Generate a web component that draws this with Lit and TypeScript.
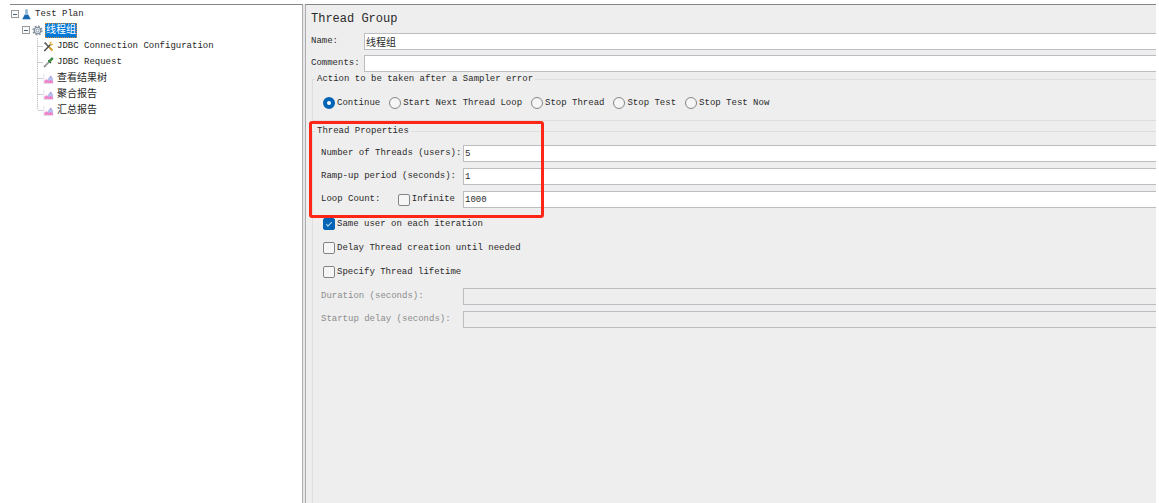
import { LitElement, html, svg, css, nothing } from "lit";
import { customElement, state } from "lit/decorators.js";

const icons: Record<string, unknown> = {
  flask: svg`<path d="M4.6 .8h2.8M5 1v4L2 10.6h8L7 5V1" fill="#dbe9f5" stroke="#8fa9bf" stroke-width=".8"/>
    <path d="M4.2 6.2h3.6l2.7 4.9h-9z" fill="#1768ae"/><path d="M5 1v5h2V1z" fill="#8dbbe0"/>`,
  gear: svg`<circle cx="6" cy="6" r="4.800" fill="none" stroke="#8a94a0" stroke-width="1.600" stroke-dasharray="2 1.770"/>
    <circle cx="6" cy="6" r="3.500" fill="#dfe5ec" stroke="#7f8a96" stroke-width="1.200"/>
    <circle cx="6" cy="6" r="1.500" fill="#fff" stroke="#7488a0" stroke-width=".8"/>`,
  tools: svg`<path d="M2.200 2.200l7.600 7.600" stroke="#555" stroke-width="1.500"/>
    <path d="M.8 2.400L2.600 1l1.800 1.600-.8 1.600z" fill="#6d6d6d"/>
    <path d="M6.800 6.800l3.600 3.800" stroke="#e0a024" stroke-width="2"/>
    <path d="M1.400 10.800l6.800-6.900" stroke="#4a4a4a" stroke-width="1.500"/>
    <path d="M7.600 1.400c1-.8 1.800-.6 2-.4L8.600 2.600l1 .9 1.500-1c.3 1-.4 2.400-1.900 2.400-1.400 0-2.500-1.500-1.600-3.500z" fill="#e2ae3c"/>`,
  dropper: svg`<path d="M1.200 10.900l5.800-6" stroke="#6e7770" stroke-width="1.800"/>
    <path d="M2.400 9.700l4.200-4.400" stroke="#d7ddd8" stroke-width=".6"/>
    <path d="M5.700 3.600l3 3" stroke="#2e3a30" stroke-width="1.300"/>
    <path d="M7 4.800l2.900-3" stroke="#3f8c45" stroke-width="2.800" stroke-linecap="round"/>`,
  chart: svg`<path d="M1 1v10.500h10.500" fill="none" stroke="#d5d5dc" stroke-width=".8"/>
    <path d="M5.500 6l2.800-3.200L11 6v5H5.500z" fill="#b4c0ec"/>
    <path d="M1.500 11V8.500l2.500-2 2.200 2.200L8.500 7l2.500 2.600V11z" fill="#ee86cc"/>
    <path d="M7.500 4.500l1-1.500 1.200 1.500z" fill="#c06fd0"/>`,
};

interface TreeItem {
  label: string;
  icon: string;
  children?: TreeItem[];
}

const plan: TreeItem = {
  label: "Test Plan",
  icon: "flask",
  children: [
    {
      label: "线程组",
      icon: "gear",
      children: [
        { label: "JDBC Connection Configuration", icon: "tools" },
        { label: "JDBC Request", icon: "dropper" },
        { label: "查看结果树", icon: "chart" },
        { label: "聚合报告", icon: "chart" },
        { label: "汇总报告", icon: "chart" },
      ],
    },
  ],
};

@customElement("plan-tree")
export class PlanTree extends LitElement {
  @state() private selected = "线程组";

  static styles = css`
    :host {
      display: block;
      padding: 1px 0 0 1px;
    }
    ul {
      list-style: none;
      margin: 0;
      padding: 0;
    }
    .nested {
      padding-left: 11px;
    }
    .leaves {
      margin-left: 4px;
      padding-left: 0;
      background: repeating-linear-gradient(#c4c4c4 0 1px, #ececec 1px 2px) 11px 0 / 1px calc(100% - 8px) no-repeat;
    }
    .row {
      display: flex;
      align-items: center;
      height: 16px;
    }
    .toggle {
      flex: none;
      box-sizing: border-box;
      width: 8px;
      height: 8px;
      margin-right: 2px;
      padding: 0;
      border: 1px solid #9a9a9a;
      background: linear-gradient(#4d5f80, #4d5f80) center / 4px 1px no-repeat #fafafa;
    }
    .branch {
      flex: none;
      width: 5px;
      height: 1px;
      margin-left: 12px;
      background: #cfcfcf;
    }
    .icon {
      flex: none;
      width: 11px;
      height: 11px;
      margin-right: 2px;
    }
    .name {
      height: 15px;
      padding: 0 1px;
      border: 0;
      background: none;
      color: #262626;
      font: 9px/15px "Liberation Mono", "Noto Sans CJK SC", monospace;
      white-space: nowrap;
    }
    .name.cjk {
      font-size: 10px;
    }
    .name.selected {
      background: #0078d7;
      color: #fff;
      outline: 1px dotted #d98a35;
      outline-offset: -1px;
    }
  `;

  private renderItem(item: TreeItem): unknown {
    const cjk = /[\u4e00-\u9fff]/.test(item.label) ? "cjk" : "";
    const chosen = item.label === this.selected ? "selected" : "";
    const kids = item.children;
    return html`<li>
      <div class="row">
        ${kids
          ? html`<button class="toggle" aria-label="Collapse"></button>`
          : html`<span class="branch"></span>`}
        <svg class="icon" viewBox="0 0 12 12" fill="none">${icons[item.icon]}</svg>
        <button class="name ${cjk} ${chosen}" @click=${() => (this.selected = item.label)}>${item.label}</button>
      </div>
      ${kids
        ? html`<ul class=${kids[0].children ? "nested" : "leaves"}>
            ${kids.map((k) => this.renderItem(k))}
          </ul>`
        : nothing}
    </li>`;
  }

  render() {
    return html`<ul>${this.renderItem(plan)}</ul>`;
  }
}

@customElement("thread-group-form")
export class ThreadGroupForm extends LitElement {
  static styles = css`
    :host {
      display: flex;
      flex-direction: column;
      padding-left: 5px;
      color: #2a2a2a;
      font: 9px/11px "Liberation Mono", "Noto Sans CJK SC", monospace;
    }
    h1 {
      margin: 0;
      font-size: 12px;
      font-weight: 400;
      line-height: 28px;
    }
    .head,
    .fields {
      display: grid;
      align-items: center;
      row-gap: 6px;
    }
    .head {
      grid-template-columns: 53px 1fr;
      row-gap: 5px;
      margin-bottom: 2px;
    }
    .fields {
      grid-template-columns: 142px 1fr;
    }
    .text {
      box-sizing: border-box;
      width: 100%;
      min-width: 0;
      height: 17px;
      padding: 0 1px;
      border: 1px solid #bdbdc1;
      border-right: 0;
      border-radius: 0;
      background: #fff;
      color: #2a2a2a;
      font: inherit;
    }
    .text.cjk {
      font-size: 10px;
    }
    .text:disabled {
      background: #eee;
    }
    .off {
      color: #8c8c8c;
    }
    fieldset {
      min-width: 0;
      margin: 0 0 0 1px;
      border: 1px solid #dedede;
      border-right: 0;
    }
    legend {
      margin-left: -6px;
      padding: 0 2px;
    }
    .action {
      margin-bottom: 5px;
      padding: 11px 0 10px 8px;
    }
    .properties {
      position: relative;
      flex: 1;
      padding: 8px 0 0 8px;
      border-bottom: 0;
    }
    .radios {
      display: flex;
      flex-wrap: wrap;
      gap: 9px;
      margin-left: 2px;
    }
    .choice {
      display: flex;
      align-items: center;
      gap: 2px;
      height: 14px;
      white-space: nowrap;
    }
    .checks {
      margin: 4px 0 4px 2px;
    }
    .checks .choice {
      height: 24px;
    }
    .loop {
      display: flex;
      justify-content: space-between;
      align-items: center;
      padding-right: 8px;
    }
    .mark {
      appearance: none;
      flex: none;
      box-sizing: border-box;
      width: 12px;
      height: 12px;
      margin: 0;
      border: 1px solid #858585;
      border-radius: 2px;
      background: #f5f5f5;
    }
    .mark[type="radio"] {
      border-radius: 50%;
    }
    .mark[type="radio"]:checked {
      border: 4px solid #0063b5;
      background: #fff;
    }
    .mark[type="checkbox"]:checked {
      display: grid;
      place-items: center;
      border-color: #0063b5;
      background: #0063b5;
    }
    .mark[type="checkbox"]:checked::before {
      content: "";
      width: 5px;
      height: 2px;
      margin-bottom: 2px;
      border: solid #b9dcf5;
      border-width: 0 0 1px 1px;
      transform: rotate(-45deg);
    }
    .highlight {
      position: absolute;
      top: -16px;
      left: -4px;
      box-sizing: border-box;
      width: 235px;
      height: 97px;
      border: 3px solid #ff2617;
      border-radius: 3px;
      pointer-events: none;
    }
  `;

  private actions = ["Continue", "Start Next Thread Loop", "Stop Thread", "Stop Test", "Stop Test Now"];
  private options = [
    { id: "same", label: "Same user on each iteration", on: true },
    { id: "delay", label: "Delay Thread creation until needed", on: false },
    { id: "lifetime", label: "Specify Thread lifetime", on: false },
  ];

  render() {
    return html`
      <h1>Thread Group</h1>
      <div class="head">
        <label for="name">Name:</label>
        <input class="text cjk" id="name" type="text" .value=${"线程组"} />
        <label for="comments">Comments:</label>
        <input class="text" id="comments" type="text" />
      </div>
      <fieldset class="action">
        <legend>Action to be taken after a Sampler error</legend>
        <div class="radios">
          ${this.actions.map(
            (a, i) => html`<label class="choice">
              <input class="mark" type="radio" name="action" ?checked=${i === 0} />${a}
            </label>`,
          )}
        </div>
      </fieldset>
      <fieldset class="properties">
        <legend>Thread Properties</legend>
        <div class="fields">
          <label for="threads">Number of Threads (users):</label>
          <input class="text" id="threads" type="text" value="5" />
          <label for="ramp">Ramp-up period (seconds):</label>
          <input class="text" id="ramp" type="text" value="1" />
          <div class="loop">
            <label for="loops">Loop Count:</label>
            <label class="choice"><input class="mark" type="checkbox" />Infinite</label>
          </div>
          <input class="text" id="loops" type="text" value="1000" />
        </div>
        <div class="checks">
          ${this.options.map(
            (o) => html`<div class="choice">
              <input class="mark" id=${o.id} type="checkbox" ?checked=${o.on} />
              <label for=${o.id}>${o.label}</label>
            </div>`,
          )}
        </div>
        <div class="fields">
          <label class="off" for="duration">Duration (seconds):</label>
          <input class="text" id="duration" type="text" disabled />
          <label class="off" for="startup">Startup delay (seconds):</label>
          <input class="text" id="startup" type="text" disabled />
        </div>
        <div class="highlight"></div>
      </fieldset>
    `;
  }
}

@customElement("app-root")
export class AppRoot extends LitElement {
  static styles = css`
    :host {
      display: block;
      background: #fff;
    }
    .window {
      display: flex;
      gap: 2px;
      box-sizing: border-box;
      min-height: 100vh;
      padding: 4px 3px 0 10px;
    }
    .tree,
    .form {
      box-sizing: border-box;
      border-top: 1px solid #858585;
    }
    .tree {
      flex: 0 0 293px;
      border-right: 1px solid #acacb0;
      background: #fff;
      box-shadow: 2px 0 #e8e8ea;
    }
    .form {
      flex: 1;
      min-width: 0;
      border-left: 1px solid #acacb0;
      background: #eee;
    }
  `;

  render() {
    return html`<main class="window">
      <plan-tree class="tree"></plan-tree>
      <thread-group-form class="form"></thread-group-form>
    </main>`;
  }
}
